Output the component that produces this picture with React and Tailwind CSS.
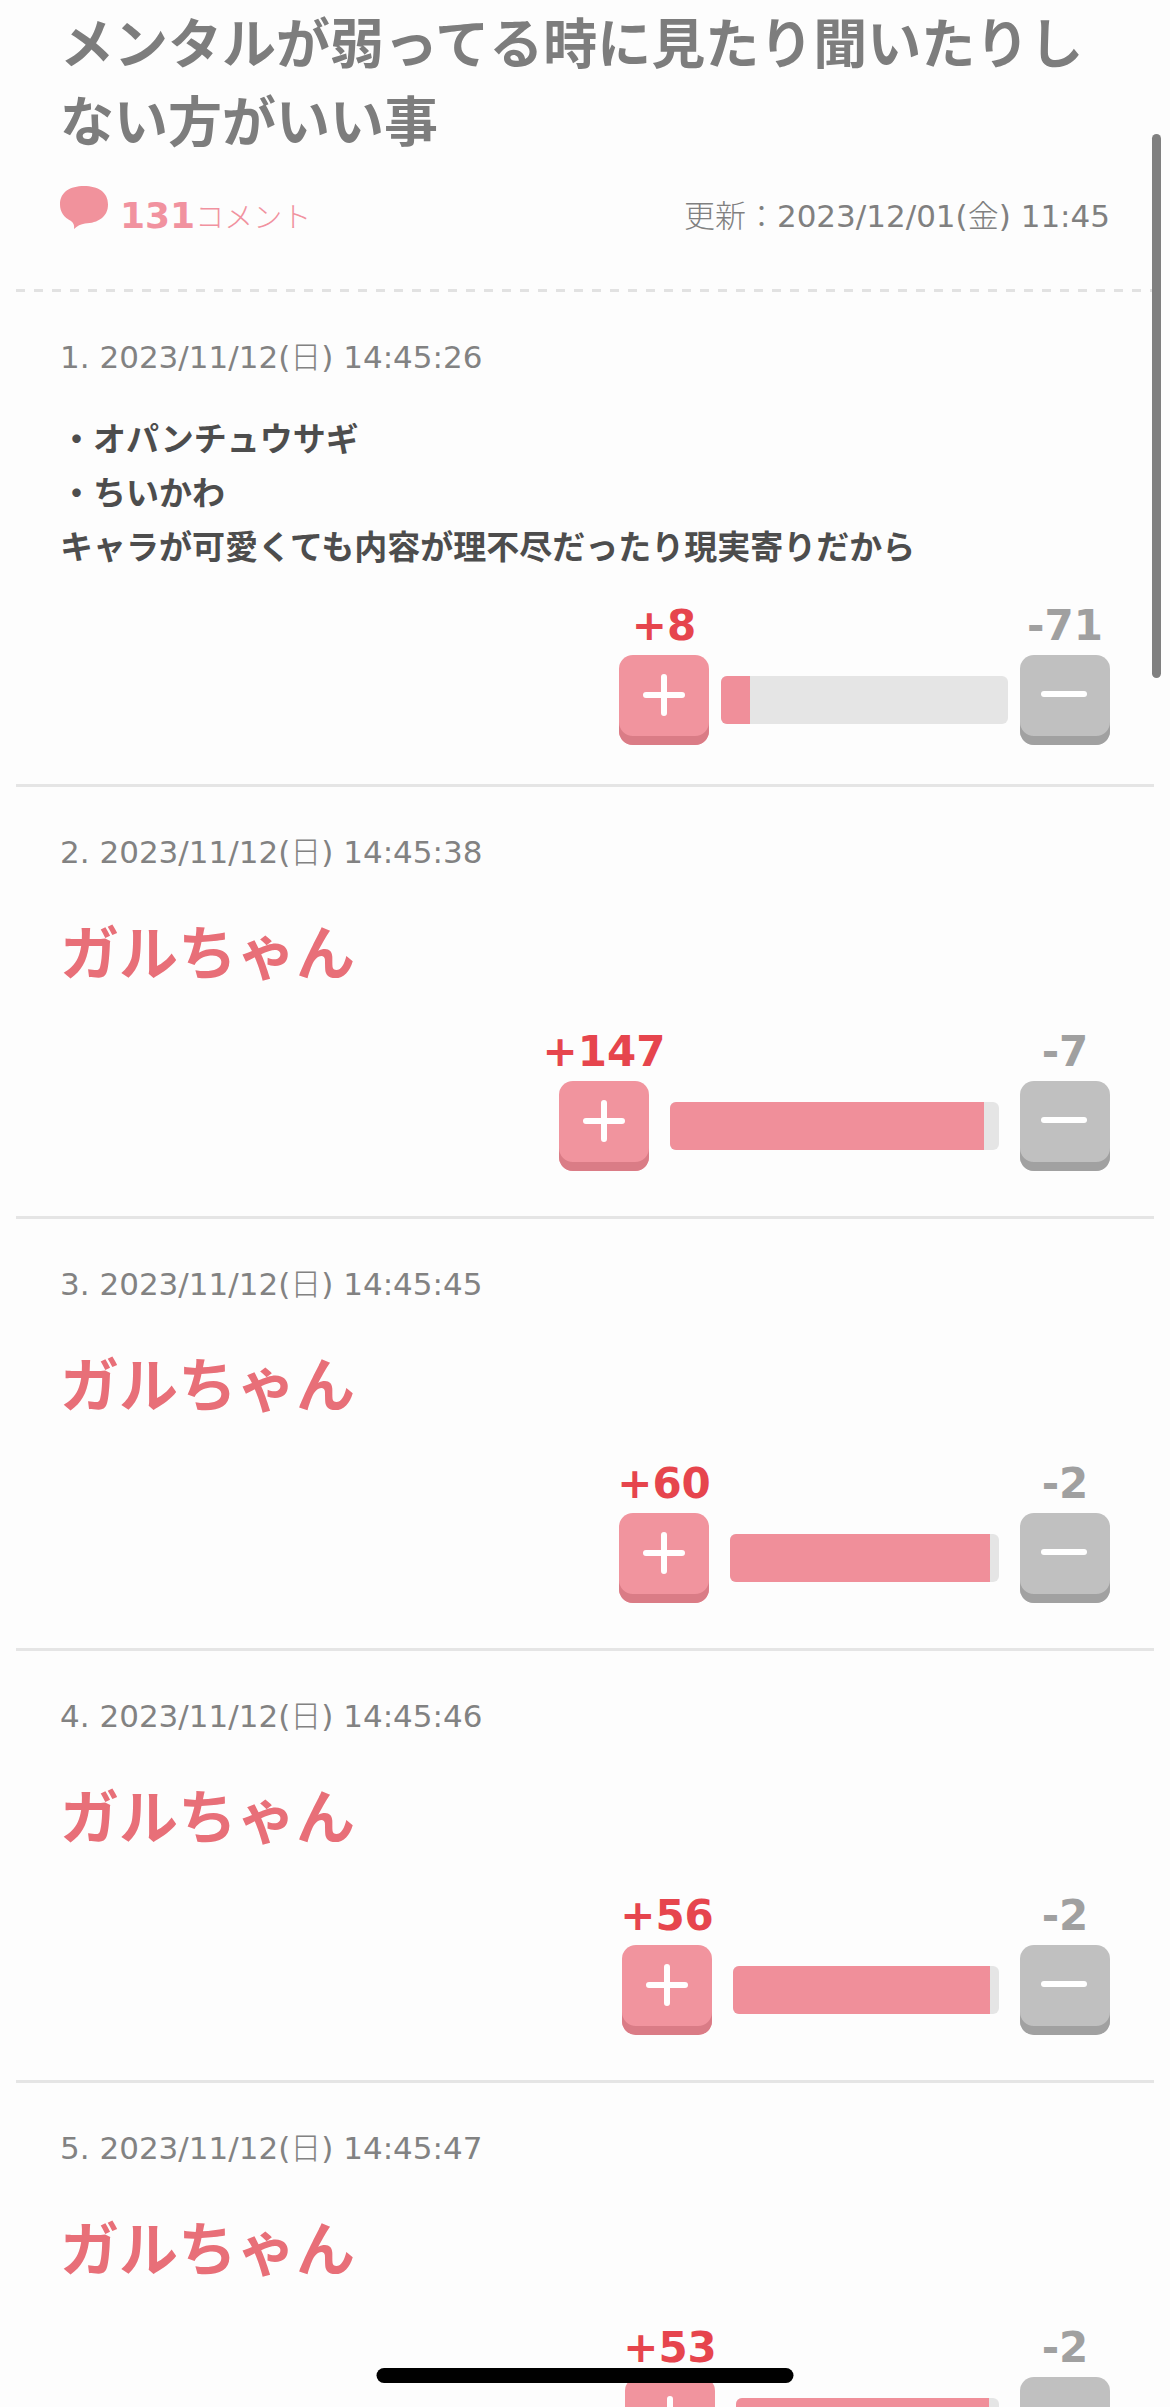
import { useState } from "react";
import clsx from "clsx";

const comments = [
  {
    id: 1,
    date: "2023/11/12",
    weekday: "日",
    time: "14:45:26",
    lines: ["・オパンチュウサギ", "・ちいかわ", "キャラが可愛くても内容が理不尽だったり現実寄りだから"],
    plus: 8,
    minus: 71,
    barWidth: 287,
  },
  {
    id: 2,
    date: "2023/11/12",
    weekday: "日",
    time: "14:45:38",
    lines: ["ガルちゃん"],
    plus: 147,
    minus: 7,
    barWidth: 329,
    popular: true,
  },
  {
    id: 3,
    date: "2023/11/12",
    weekday: "日",
    time: "14:45:45",
    lines: ["ガルちゃん"],
    plus: 60,
    minus: 2,
    barWidth: 269,
    popular: true,
  },
  {
    id: 4,
    date: "2023/11/12",
    weekday: "日",
    time: "14:45:46",
    lines: ["ガルちゃん"],
    plus: 56,
    minus: 2,
    barWidth: 266,
    popular: true,
  },
  {
    id: 5,
    date: "2023/11/12",
    weekday: "日",
    time: "14:45:47",
    lines: ["ガルちゃん"],
    plus: 53,
    minus: 2,
    barWidth: 263,
    popular: true,
  },
];

function BubbleIcon() {
  return (
    <svg viewBox="0 0 48 43" className="h-[43px] w-12 self-start" fill="#f1929c" aria-hidden="true">
      <path d="M24 0C38 0 48 6 48 18.500C48 31 38 37 25 37.500C21 38 17 40 14 43C14.500 40 14 37 11 35C4 31.500 0 26 0 18.500C0 6 10 0 24 0Z" />
    </svg>
  );
}

function PlusIcon() {
  return (
    <svg viewBox="0 0 90 90" className="h-full w-full" stroke="#fff" strokeWidth="6" strokeLinecap="round" aria-hidden="true">
      <path d="M27 40H63M45 22V58" />
    </svg>
  );
}

function MinusIcon() {
  return (
    <svg viewBox="0 0 90 90" className="h-full w-full" stroke="#fff" strokeWidth="6" strokeLinecap="round" aria-hidden="true">
      <path d="M24 39H64" />
    </svg>
  );
}

function Timestamp({ date, weekday, time }) {
  return (
    <time>
      {date}(<span className="font-light">{weekday}</span>) {time}
    </time>
  );
}

function Votes({ comment }) {
  const [voted, setVoted] = useState(null);

  const plus = comment.plus + (voted === "plus" ? 1 : 0);
  const minus = comment.minus + (voted === "minus" ? 1 : 0);
  const ratio = (plus / (plus + minus)) * 100;

  return (
    <div
      className={clsx(
        "mt-[22px] flex items-end justify-end",
        comment.popular ? "gap-[21px] pb-[45px]" : "gap-3 pb-[39px]"
      )}
    >
      {/* Plus */}
      <div className="flex w-[90px] flex-col items-center">
        <span className="text-[42px] leading-[58px] font-bold whitespace-nowrap text-[#e6454d]">+{plus}</span>
        <button
          type="button"
          aria-label="プラス"
          onClick={() => setVoted("plus")}
          className="h-[90px] w-[90px] cursor-pointer rounded-[14px] bg-[#f1949e] shadow-[inset_0_-9px_0_#da7c86]"
        >
          <PlusIcon />
        </button>
      </div>

      {/* Ratio bar */}
      <div className="mb-[21px] h-12 overflow-hidden rounded-md bg-[#e5e5e5]" style={{ width: comment.barWidth }}>
        <div className="h-full bg-[#f08f9a]" style={{ width: `${ratio}%` }}></div>
      </div>

      {/* Minus */}
      <div className="flex w-[90px] flex-col items-center">
        <span className="text-[42px] leading-[58px] font-bold whitespace-nowrap text-[#a0a0a0]">-{minus}</span>
        <button
          type="button"
          aria-label="マイナス"
          onClick={() => setVoted("minus")}
          className="h-[90px] w-[90px] cursor-pointer rounded-[14px] bg-[#c0c0c0] shadow-[inset_0_-9px_0_#a1a1a1]"
        >
          <MinusIcon />
        </button>
      </div>
    </div>
  );
}

function Comment({ comment }) {
  return (
    <li className="border-b-[3px] border-[#e5e5e5] px-11 pt-[45px]">
      <p className="text-[31px] leading-10 text-[#828282]">
        {comment.id}. <Timestamp date={comment.date} weekday={comment.weekday} time={comment.time} />
      </p>
      <div
        className={clsx(
          "mt-9 font-bold",
          comment.popular ? "text-[59px] leading-[93px] text-[#e86f78]" : "text-[33px] leading-[54px] text-[#4d4d4d]"
        )}
      >
        {comment.lines.map((line) => (
          <p key={line}>{line}</p>
        ))}
      </div>
      <Votes comment={comment} />
    </li>
  );
}

export default function App() {
  return (
    <div className="relative h-screen overflow-hidden bg-[#fdfdfd] font-['DejaVu_Sans','Noto_Sans_CJK_JP',sans-serif]">
      <main className="px-4">
        {/* Topic header */}
        <header className="px-11 pt-[7px] pb-[43px]">
          <h1 className="text-[54px] leading-[78px] font-bold text-[#7d7d7d]">
            メンタルが弱ってる時に見たり聞いたりしない方がいい事
          </h1>
          <div className="mt-[23px] flex h-[60px] items-center justify-between">
            <div className="flex h-full items-center gap-3 text-[#f1929f]">
              <BubbleIcon />
              <p className="flex items-baseline pt-1">
                <span className="text-4xl font-bold">131</span>
                <span className="text-[29px] font-light">コメント</span>
              </p>
            </div>
            <p className="text-[31px] leading-10 text-[#808080]">
              <span className="font-light">更新：</span>
              <Timestamp date="2023/12/01" weekday="金" time="11:45" />
            </p>
          </div>
        </header>
        <div className="h-[3px] bg-[repeating-linear-gradient(90deg,#e2e2e2_0_9px,transparent_9px_18px)]"></div>

        <ul>
          {comments.map((comment) => (
            <Comment key={comment.id} comment={comment} />
          ))}
        </ul>
      </main>

      {/* Scroll indicator */}
      <div className="absolute top-[134px] right-[9px] h-[544px] w-[9px] rounded-full bg-[#808080]"></div>

      {/* Home indicator */}
      <div className="absolute bottom-6 left-1/2 h-[15px] w-[417px] -translate-x-1/2 rounded-full bg-black"></div>
    </div>
  );
}
